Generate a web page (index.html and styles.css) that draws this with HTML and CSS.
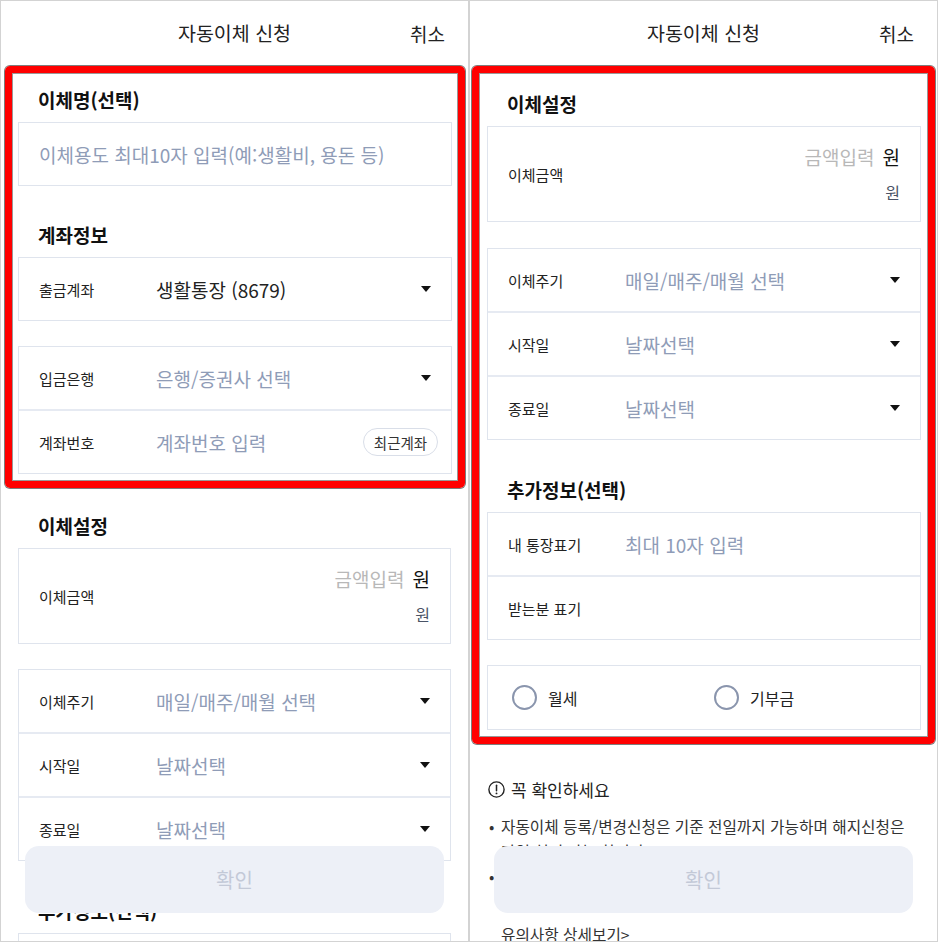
FILE: index.html
```html
<!DOCTYPE html>
<html lang="ko">
<head>
<meta charset="utf-8">
<title>자동이체 신청</title>
<link rel="stylesheet" href="styles.css">
</head>
<body>
<div class="screens">
  <!-- Screen 1 -->
  <section class="phone">
    <header class="topbar">
      <span></span>
      <h1 class="topbar-title">자동이체 신청</h1>
      <span class="topbar-cancel">취소</span>
    </header>
    <div class="highlight highlight--a">
      <section class="group">
        <h2 class="group-title">이체명(선택)</h2>
        <div class="card">
          <div class="row"><span class="row-value is-placeholder">이체용도 최대10자 입력(예:생활비, 용돈 등)</span></div>
        </div>
      </section>
      <section class="group">
        <h2 class="group-title">계좌정보</h2>
        <div class="card">
          <div class="row">
            <span class="row-label">출금계좌</span>
            <span class="row-value">생활통장 (8679)</span>
            <svg class="caret" width="10" height="6" viewBox="0 0 10 6"><path d="M0 0H10L5 6Z" fill="#111"/></svg>
          </div>
        </div>
        <div class="card">
          <div class="row">
            <span class="row-label">입금은행</span>
            <span class="row-value is-placeholder">은행/증권사 선택</span>
            <svg class="caret" width="10" height="6" viewBox="0 0 10 6"><path d="M0 0H10L5 6Z" fill="#111"/></svg>
          </div>
          <div class="row">
            <span class="row-label">계좌번호</span>
            <span class="row-value is-placeholder">계좌번호 입력</span>
            <span class="pill">최근계좌</span>
          </div>
        </div>
      </section>
    </div>
    <section class="group group--after">
      <h2 class="group-title">이체설정</h2>
      <div class="card">
        <div class="row row--amount">
          <span class="row-label">이체금액</span>
          <div class="amount">
            <div class="amount-line"><span class="amount-ph">금액입력</span><span class="amount-unit">원</span></div>
            <div class="amount-line"><span class="amount-sub">원</span></div>
          </div>
        </div>
      </div>
      <div class="card">
        <div class="row">
          <span class="row-label">이체주기</span>
          <span class="row-value is-placeholder">매일/매주/매월 선택</span>
          <svg class="caret" width="10" height="6" viewBox="0 0 10 6"><path d="M0 0H10L5 6Z" fill="#111"/></svg>
        </div>
        <div class="row">
          <span class="row-label">시작일</span>
          <span class="row-value is-placeholder">날짜선택</span>
          <svg class="caret" width="10" height="6" viewBox="0 0 10 6"><path d="M0 0H10L5 6Z" fill="#111"/></svg>
        </div>
        <div class="row">
          <span class="row-label">종료일</span>
          <span class="row-value is-placeholder">날짜선택</span>
          <svg class="caret" width="10" height="6" viewBox="0 0 10 6"><path d="M0 0H10L5 6Z" fill="#111"/></svg>
        </div>
      </div>
    </section>
    <section class="group group--spaced">
      <h2 class="group-title">추가정보(선택)</h2>
      <div class="card">
        <div class="row">
          <span class="row-label">내 통장표기</span>
          <span class="row-value is-placeholder">최대 10자 입력</span>
        </div>
        <div class="row">
          <span class="row-label">받는분 표기</span>
        </div>
      </div>
    </section>
    <button class="cta" type="button">확인</button>
  </section>

  <!-- Screen 2 -->
  <section class="phone">
    <header class="topbar">
      <span></span>
      <h1 class="topbar-title">자동이체 신청</h1>
      <span class="topbar-cancel">취소</span>
    </header>
    <div class="highlight highlight--b">
      <section class="group">
        <h2 class="group-title">이체설정</h2>
        <div class="card">
          <div class="row row--amount">
            <span class="row-label">이체금액</span>
            <div class="amount">
              <div class="amount-line"><span class="amount-ph">금액입력</span><span class="amount-unit">원</span></div>
              <div class="amount-line"><span class="amount-sub">원</span></div>
            </div>
          </div>
        </div>
        <div class="card card--gap26">
          <div class="row">
            <span class="row-label">이체주기</span>
            <span class="row-value is-placeholder">매일/매주/매월 선택</span>
            <svg class="caret" width="10" height="6" viewBox="0 0 10 6"><path d="M0 0H10L5 6Z" fill="#111"/></svg>
          </div>
          <div class="row">
            <span class="row-label">시작일</span>
            <span class="row-value is-placeholder">날짜선택</span>
            <svg class="caret" width="10" height="6" viewBox="0 0 10 6"><path d="M0 0H10L5 6Z" fill="#111"/></svg>
          </div>
          <div class="row">
            <span class="row-label">종료일</span>
            <span class="row-value is-placeholder">날짜선택</span>
            <svg class="caret" width="10" height="6" viewBox="0 0 10 6"><path d="M0 0H10L5 6Z" fill="#111"/></svg>
          </div>
        </div>
      </section>
      <section class="group group--spaced">
        <h2 class="group-title">추가정보(선택)</h2>
        <div class="card">
          <div class="row">
            <span class="row-label">내 통장표기</span>
            <span class="row-value is-placeholder">최대 10자 입력</span>
          </div>
          <div class="row">
            <span class="row-label">받는분 표기</span>
          </div>
        </div>
        <div class="card">
          <div class="row row--radios">
            <label class="radio"><span class="radio-dot"></span><span class="radio-text">월세</span></label>
            <label class="radio"><span class="radio-dot"></span><span class="radio-text">기부금</span></label>
          </div>
        </div>
      </section>
    </div>
    <section class="notice">
      <h3 class="notice-title">
        <svg class="notice-icon" width="17" height="17" viewBox="0 0 17 17"><circle cx="8.5" cy="8.5" r="7.6" fill="none" stroke="#222" stroke-width="1.4"/><path d="M8.5 4.3V9.8" stroke="#222" stroke-width="1.5" stroke-linecap="round"/><circle cx="8.5" cy="12.4" r="0.95" fill="#222"/></svg>
        꼭 확인하세요
      </h3>
      <ul class="notice-list">
        <li>자동이체 등록/변경신청은 기준 전일까지 가능하며 해지신청은 당일 처리 가능 합니다.</li>
        <li>출금계좌의 잔액이 부족한 경우 자동이체가 처리되지 않을 수 있으니 미리 잔액을 확인해 주세요.</li>
      </ul>
      <a class="notice-link">유의사항 상세보기&gt;</a>
    </section>
    <button class="cta" type="button">확인</button>
  </section>
</div>
</body>
</html>
```

FILE: styles.css
```css
* { box-sizing: border-box; }

body {
  margin: 0;
  background: #fff;
  font-family: "Noto Sans CJK KR", "Noto Sans", sans-serif;
  color: #222;
}

.screens {
  display: flex;
  width: 938px;
  height: 942px;
}

.phone {
  position: relative;
  width: 469px;
  height: 942px;
  border: 1px solid #d3d3d3;
  overflow: hidden;
  background: #fff;
}

/* header */
.topbar {
  display: grid;
  grid-template-columns: 1fr auto 1fr;
  align-items: center;
  height: 64px;
  padding: 0 23px;
}
.topbar-title {
  margin: 0;
  font-size: 19.5px;
  font-weight: 400;
  color: #222;
  line-height: 1;
}
.topbar-cancel {
  justify-self: end;
  font-size: 19px;
  color: #222;
  line-height: 1;
}

/* red highlight frame */
.highlight {
  margin-top: 1px;
  border: 7px solid #ff0000;
  border-radius: 5px;
  box-shadow: 0 0 0 1px rgba(70, 70, 70, 0.7), inset 0 0 0 1px rgba(70, 70, 70, 0.55);
}
.highlight--a {
  margin-left: 4px;
  margin-right: 3px;
  padding: 15px 6px 7px 6px;
}
.highlight--b {
  margin-left: 2px;
  margin-right: 2px;
  padding: 19px 7px 7px 8px;
}

/* groups */
.group + .group { margin-top: 37px; }
.group.group--spaced { margin-top: 38px; }
.group--after {
  margin: 26px 17px 0 17px;
}
.phone > .group--spaced {
  margin-left: 17px;
  margin-right: 17px;
}

.group-title {
  margin: 0 0 10px;
  padding-left: 20px;
  font-size: 19px;
  font-weight: 700;
  line-height: 24px;
  color: #111;
}

/* cards */
.card {
  border: 1px solid #dfe4ed;
  background: #fff;
}
.card + .card { margin-top: 25px; }
.card.card--gap26 { margin-top: 26px; }

.row {
  display: flex;
  align-items: center;
  height: 62px;
  padding: 0 20px;
}
.row + .row {
  height: 64px;
  border-top: 2px solid #e6eaf2;
}

.row-label {
  flex: none;
  width: 117px;
  font-size: 15px;
  color: #222;
  white-space: nowrap;
}
.row-value {
  flex: 1;
  font-size: 19px;
  color: #222;
  white-space: nowrap;
}
.row-value.is-placeholder { color: #8f9cb7; }

.caret { flex: none; }

.pill {
  flex: none;
  display: flex;
  align-items: center;
  justify-content: center;
  width: 75px;
  height: 28px;
  margin-right: -7px;
  border: 1px solid #d9dee8;
  border-radius: 14px;
  font-size: 14.5px;
  color: #333;
}

/* amount row */
.row.row--amount { height: 94px; }
.amount {
  margin-left: auto;
  display: flex;
  flex-direction: column;
  align-items: flex-end;
}
.amount-line {
  display: flex;
  align-items: center;
  gap: 8px;
  height: 36px;
}
.amount-ph { font-size: 19px; color: #b8b8b8; }
.amount-unit { font-size: 19px; color: #111; }
.amount-sub { font-size: 16px; color: #4a5366; }

/* radios */
.row.row--radios {
  display: grid;
  grid-template-columns: 202px 1fr;
  height: 63px;
  padding: 0 0 0 24px;
}
.radio {
  display: flex;
  align-items: center;
  gap: 11px;
}
.radio-dot {
  width: 25px;
  height: 25px;
  border: 2.5px solid #8a95ad;
  border-radius: 50%;
}
.radio-text { font-size: 16px; color: #222; }

/* notice */
.notice {
  padding: 33px 18px 0 18px;
}
.notice-title {
  display: flex;
  align-items: center;
  gap: 6px;
  margin: 0;
  height: 24px;
  font-size: 17px;
  font-weight: 400;
  color: #222;
}
.notice-list {
  list-style: none;
  margin: 13px 0 0;
  padding: 0;
}
.notice-list li {
  position: relative;
  padding-left: 13px;
  font-size: 15.7px;
  line-height: 25px;
  color: #333;
}
.notice-list li::before {
  content: "•";
  position: absolute;
  left: 1px;
  top: 0;
}
.notice-link {
  display: block;
  margin-top: 8px;
  padding-left: 13px;
  font-size: 15.7px;
  line-height: 25px;
  color: #333;
}

/* bottom button */
.cta {
  position: absolute;
  left: 24px;
  right: 24px;
  bottom: 28px;
  height: 67px;
  border: 0;
  border-radius: 14px;
  background: #edf0f7;
  color: #c3c9d7;
  font-family: inherit;
  font-size: 20px;
}
```
